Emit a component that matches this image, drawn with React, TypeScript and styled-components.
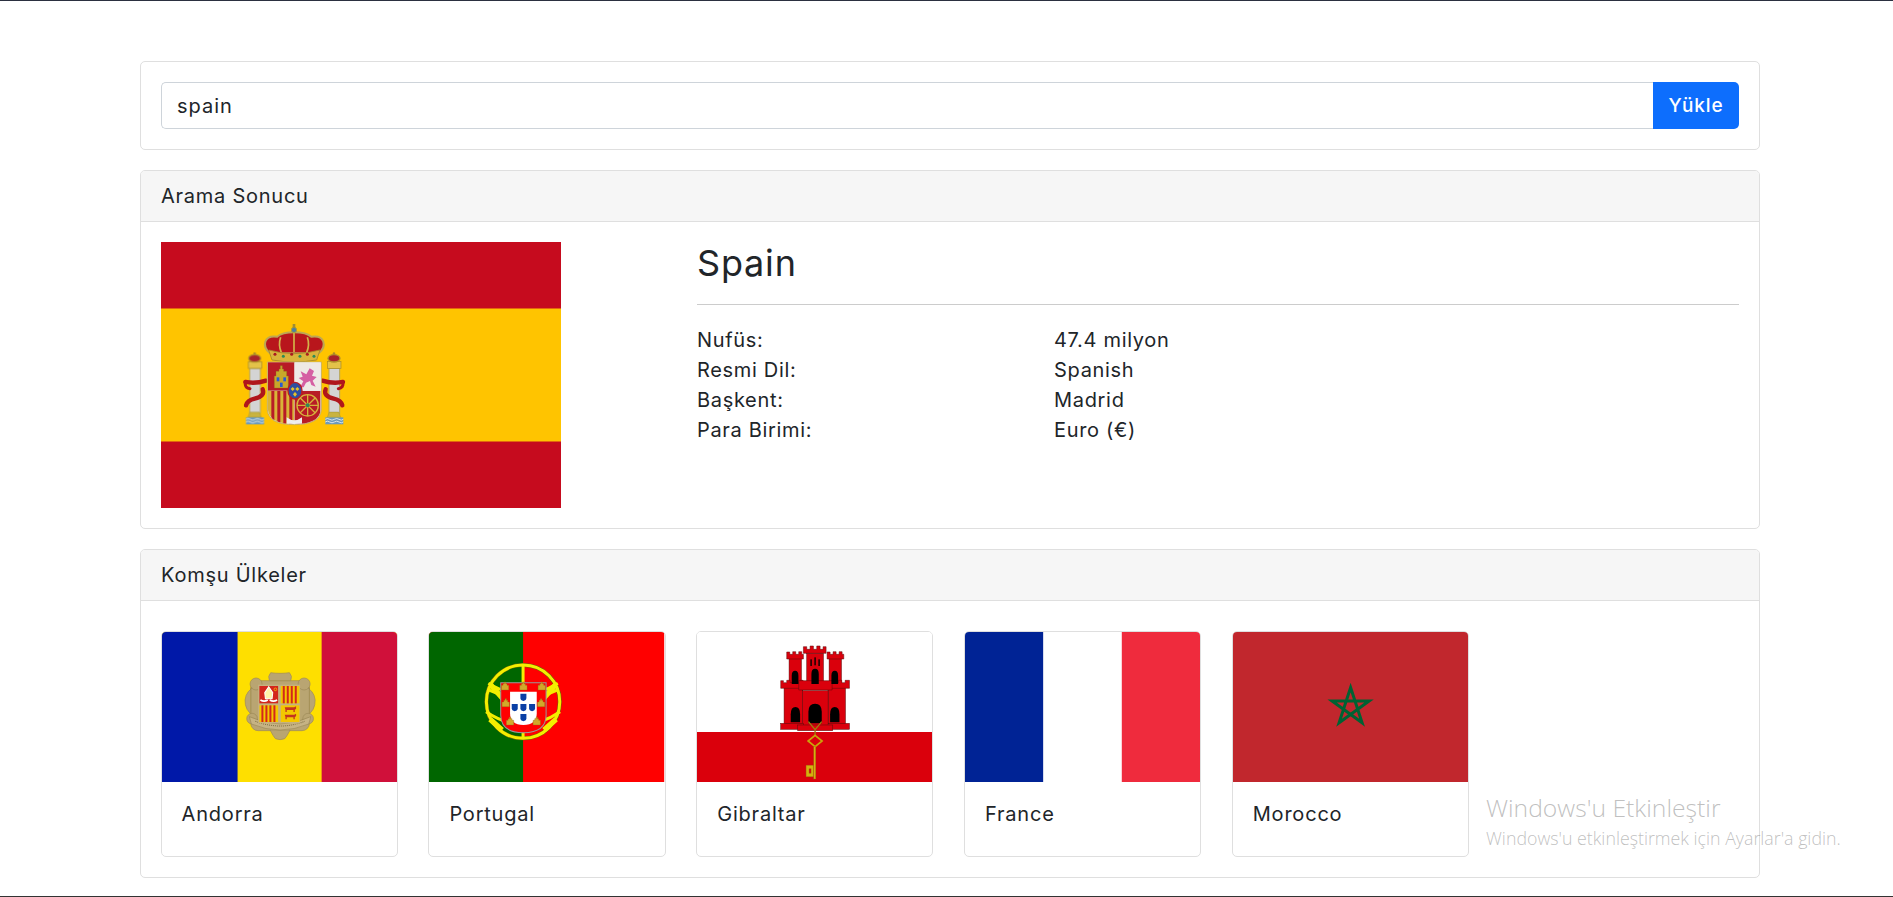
import React from "react";
import styled, { createGlobalStyle } from "styled-components";

const Global = createGlobalStyle`
  html, body { margin: 0; padding: 0; background: #fff; }
  body { font-family: Inter, "Noto Sans", "Liberation Sans", sans-serif; color: #212529; font-weight: 400; }
`;

const Page = styled.div`
  position: relative;
  height: 897px;
  box-sizing: border-box;
  overflow: hidden;
  border-top: 1px solid #2b3040;
  border-bottom: 1px solid #333;
  padding: 60px 133px 0 140px;
  display: flex;
  flex-direction: column;
  gap: 20px;
`;

const Card = styled.section`
  border: 1px solid #dfdfdf;
  border-radius: 5px;
  background: #fff;
  overflow: hidden;
`;

const SearchBody = styled.form`
  padding: 20px;
  display: flex;
  margin: 0;
`;

const SearchInput = styled.input`
  flex: 1;
  min-width: 0;
  height: 47px;
  box-sizing: border-box;
  border: 1px solid #ced4da;
  border-right: 0;
  border-radius: 5px 0 0 5px;
  padding: 0 15px;
  font: 400 20px Inter, sans-serif;
  letter-spacing: 1px;
  color: #212529;
  outline: none;
`;

const LoadButton = styled.button`
  width: 86px;
  height: 47px;
  border: 0;
  border-radius: 0 5px 5px 0;
  background: #0d6efd;
  color: #fff;
  font: 500 19px Inter, sans-serif;
  letter-spacing: 0.9px;
`;

const CardHeader = styled.header`
  height: 51px;
  box-sizing: border-box;
  background: #f6f6f6;
  border-bottom: 1px solid #dfdfdf;
  padding: 0 20px;
  display: flex;
  align-items: center;
  font-size: 20px;
  letter-spacing: 0.75px;
`;

const ResultBody = styled.div`
  padding: 20px;
  display: grid;
  grid-template-columns: 536px 1fr;
`;

const MainFlag = styled.div`
  width: 400px;
  height: 266px;
  svg { display: block; width: 100%; height: 100%; }
`;

const Title = styled.h1`
  margin: 0;
  height: 62px;
  font-size: 36px;
  line-height: 43px;
  font-weight: 400;
  letter-spacing: 0.8px;
  color: #212529;
`;

const Rule = styled.hr`
  margin: 0 0 20px;
  border: 0;
  border-top: 1px solid #ccc;
`;

const Facts = styled.dl`
  margin: 0;
  display: grid;
  grid-template-columns: 357px 1fr;
  grid-auto-rows: 30px;
  font-size: 20px;
  line-height: 30px;
  letter-spacing: 0.68px;
`;

const Term = styled.dt``;

const Value = styled.dd`
  margin: 0;
`;

const NeighbourBody = styled.div`
  padding: 30px 20px 20px 19.6px;
  display: flex;
  gap: 30.6px;
`;

const Neighbour = styled.article`
  width: 237.2px;
  box-sizing: border-box;
  border: 1px solid #dfdfdf;
  border-radius: 5px;
  overflow: hidden;
`;

const NeighbourFlag = styled.div`
  height: 150px;
  svg { display: block; width: 100%; height: 100%; }
`;

const NeighbourName = styled.div`
  padding: 17px 20px 27px;
  font-size: 20px;
  line-height: 30px;
  letter-spacing: 0.8px;
`;

const Watermark = styled.div`
  position: absolute;
  left: 1486px;
  top: 791px;
  color: rgba(150, 150, 150, 0.6);
  font-family: "Open Sans", sans-serif;
  font-weight: 300;
  white-space: nowrap;
  pointer-events: none;
`;

const WatermarkTitle = styled.div`
  font-size: 24.7px;
  line-height: 32px;
`;

const WatermarkText = styled.div`
  font-size: 17.8px;
  line-height: 28px;
`;

const SpainFlag = () => (
  <svg viewBox="0 0 400 266" preserveAspectRatio="none">
    <defs>
      <filter id="soft" x="-5%" y="-5%" width="110%" height="110%">
        <feGaussianBlur stdDeviation="1.2" />
      </filter>
      <clipPath id="spain-low">
        <path d="M144 272H302V330Q298 372 223 372Q148 372 144 330Z" />
      </clipPath>
    </defs>
    <rect width="400" height="266" fill="#c60b1e" />
    <rect y="66.5" width="400" height="133" fill="#ffc400" />
    <g transform="translate(59 58) scale(.3333)" filter="url(#soft)">
      {[0, 238].map((dx) => (
        <g key={dx} transform={`translate(${dx} 0)`}>
          <rect x="89" y="205" width="32" height="135" fill="#d4d4d4" stroke="#b5a55e" strokeWidth="3" />
          <rect x="85" y="185" width="40" height="20" fill="#e3c24a" stroke="#a58a2a" strokeWidth="2" />
          <ellipse cx="104" cy="175" rx="18" ry="11" fill="#a9242a" stroke="#b0902c" strokeWidth="4" />
          <circle cx="104" cy="161" r="4" fill="#a8892a" />
          <path d="M90 336h28l6 16H84z" fill="#c9b33f" stroke="#8f8230" />
          <rect x="78" y="352" width="54" height="21" fill="#6a9abd" />
          <path d="M78 358q6-5 13 0t14 0 14 0 13 0M78 366q6-5 13 0t14 0 14 0 13 0" stroke="#eef2f2" strokeWidth="2.5" fill="none" />
        </g>
      ))}
      <g fill="none" stroke="#b0131c" strokeWidth="13" strokeLinecap="round" strokeLinejoin="round">
        <path d="M76 246q30 6 62-4" />
        <path d="M76 248q-2 16 14 18" strokeWidth="9" />
        <path d="M128 268q8 20-24 28q-22 5-26 20" />
        <path d="M307 242q32 10 62 4" />
        <path d="M369 248q2 16-14 18" strokeWidth="9" />
        <path d="M317 268q-8 20 24 28q22 5 26 20" />
      </g>
      <path d="M150 160C124 138 132 104 172 110C190 92 255 92 274 110C314 104 322 138 296 160Z" fill="#b8161f" stroke="#bda652" strokeWidth="6" />
      <path d="M222 98v58M182 112q-8 22 2 46M262 112q8 22-2 46" stroke="#d2b349" strokeWidth="5" fill="none" />
      <path d="M146 150Q222 172 300 150L290 180Q222 192 156 180Z" fill="#d9b33a" stroke="#a2852a" strokeWidth="2.5" />
      <circle cx="222" cy="90" r="8" fill="#4d7f9f" stroke="#a89a3e" strokeWidth="3" />
      <rect x="218" y="72" width="8" height="12" fill="#a08d33" />
      {[165, 190, 215, 240, 262, 282].map((x, i) => (
        <circle key={x} cx={x} cy={i % 2 ? 169 : 163} r="4.5" fill={i % 2 ? "#2e8b57" : "#a81a22"} />
      ))}
      <path d="M142 186H304V330Q300 374 223 374Q146 374 142 330Z" fill="#e9e9e9" stroke="#c7b05a" strokeWidth="3" />
      <rect x="144" y="187" width="79" height="85" fill="#b81f25" />
      <path d="M163 264V228h5v-14h9v-7h4v-10h6v10h4v7h9v14h5v36z" fill="#c8a82c" stroke="#8a7320" />
      <rect x="170" y="232" width="8" height="12" fill="#2b5bd0" />
      <rect x="190" y="232" width="8" height="12" fill="#2b5bd0" />
      <rect x="180" y="248" width="8" height="13" fill="#2b5bd0" />
      <rect x="224" y="187" width="78" height="85" fill="#eee9e6" />
      <path d="M240 262l10-18-14-10 12-4-6-16 17 9 10-18 13 8-6 14 14 4-12 11 9 18-13-5-4-12-12 5-7 14z" fill="#d55fa3" />
      <g clipPath="url(#spain-low)">
        <rect x="144" y="272" width="79" height="102" fill="#d9b338" />
        {[154, 172, 190, 208].map((x) => (
          <rect key={x} x={x} y="272" width="9" height="102" fill="#b81f25" />
        ))}
        <rect x="224" y="272" width="78" height="102" fill="#b81f25" />
        <g stroke="#d5b13c" strokeWidth="4" fill="none">
          <circle cx="263" cy="316" r="32" />
          <path d="M231 316h64M263 284v64M240 293l46 46M286 293l-46 46" />
        </g>
        <circle cx="263" cy="316" r="6" fill="#2e8b57" />
        <path d="M200 352q23 18 46 0v22h-46z" fill="#eee" />
      </g>
      <ellipse cx="225" cy="272" rx="21" ry="25" fill="#2f4fa0" stroke="#b81f25" strokeWidth="4" />
      <path d="M218 261l6 6-6 6-6-6zM232 261l6 6-6 6-6-6zM225 276l6 7-6 7-6-7z" fill="#e6c22c" />
    </g>
  </svg>
);

const AndorraFlag = () => (
  <svg viewBox="0 0 235 150" preserveAspectRatio="none">
    <rect width="235" height="150" fill="#fedf00" />
    <rect width="75.5" height="150" fill="#0018a8" />
    <rect x="159.5" width="75.5" height="150" fill="#d0103a" />
    <g transform="translate(68 28) scale(.3333)">
      <g fill="#b9a572" stroke="#9d8a58" strokeWidth="2">
        <rect x="62" y="62" width="176" height="150" rx="22" />
        <path d="M118 62q-6-14 4-24 12 2 28 2t28-2q10 10 4 24z" />
        <circle cx="78" cy="72" r="18" />
        <circle cx="222" cy="72" r="18" />
        <path d="M66 84q-26 20-20 50 2 14 16 28v-78z" />
        <path d="M234 84q26 20 20 50-2 14-16 28v-78z" />
        <circle cx="66" cy="176" r="16" />
        <circle cx="234" cy="176" r="16" />
        <path d="M120 210q10 20 16 26 14 6 28 0 6-6 16-26z" />
      </g>
      <path d="M58 170q92 44 184 0l-6 22q-86 36-172 0z" fill="#c6b384" stroke="#8f7c4c" strokeWidth="1.5" />
      <path d="M76 184q74 28 148 0" stroke="#7d6c40" strokeWidth="3" strokeDasharray="3 3" fill="none" />
      <rect x="84" y="74" width="126" height="116" fill="#c4b180" />
      <rect x="88" y="78" width="56" height="52" fill="#d3261c" />
      <path d="M116 80l12 18-2 18h-20l-2-18z" fill="#fff2a8" stroke="#fff" strokeWidth="3" />
      <path d="M91 120q11 7 22 0M119 120q11 7 22 0" stroke="#fff" strokeWidth="5" fill="none" />
      <circle cx="136" cy="88" r="4" fill="none" stroke="#ffd200" strokeWidth="2" />
      <rect x="152" y="78" width="56" height="52" fill="#f3c700" />
      <rect x="88" y="136" width="56" height="50" fill="#f3c700" />
      {[0, 1, 2, 3].map((i) => (
        <React.Fragment key={i}>
          <rect x={158 + i * 12} y="78" width="6" height="52" fill="#d3261c" />
          <rect x={94 + i * 12} y="136" width="6" height="50" fill="#d3261c" />
        </React.Fragment>
      ))}
      <rect x="152" y="136" width="56" height="50" fill="#f3c700" />
      {[142, 164].map((y) => (
        <path key={y} d={`M164 ${y}h28l6-3v8l-4 2v7h-4v-6h-20v6h-4v-7z`} fill="#c3341e" />
      ))}
    </g>
  </svg>
);

const PortugalFlag = () => (
  <svg viewBox="0 0 235 150" preserveAspectRatio="none">
    <rect width="235" height="150" fill="#f00" />
    <rect width="94" height="150" fill="#060" />
    <g transform="translate(41 28) scale(.3333)">
      <g fill="none" strokeLinejoin="round">
        <circle cx="159" cy="125" r="110" stroke="#6b6b00" strokeWidth="12" />
        <g stroke="#f4ee00" strokeWidth="9">
          <circle cx="159" cy="125" r="110" />
          <path d="M159 15V235M52 88Q159 140 266 88M55 70Q159 135 263 70M48 155Q159 230 270 155" />
          <path d="M62 75L100 118M256 75L218 118M60 178L96 210M258 178L222 210" strokeWidth="16" />
        </g>
      </g>
      <path d="M92 68H228V165Q228 218 160 218Q92 218 92 165Z" fill="#f00" stroke="#999" strokeWidth="3" />
      <path d="M120 95H200V160Q200 195 160 195Q120 195 120 160Z" fill="#fff" />
      {[[160, 111], [134, 142], [160, 142], [186, 142], [160, 172]].map(([x, y]) => (
        <path key={`${x}-${y}`} d={`M${x - 9} ${y - 10}h18v13q0 7-9 9q-9-2-9-9z`} fill="#0a3fa5" />
      ))}
      {[[105, 80], [160, 80], [215, 80], [107, 130], [213, 130], [120, 185], [200, 185]].map(([x, y]) => (
        <path key={`c${x}-${y}`} d={`M${x - 11} ${y + 10}v-14h5v-5h4v-5h4v5h4v5h5v14z`} fill="#d2a92a" stroke="#8c6d14" />
      ))}
    </g>
  </svg>
);

const GibraltarFlag = () => (
  <svg viewBox="0 0 235 150" preserveAspectRatio="none">
    <rect width="235" height="150" fill="#fff" />
    <rect y="100" width="235" height="50" fill="#da000c" />
    <g transform="translate(63 -2) scale(.3333)">
      <g fill="#da000c" stroke="#5a0a0a" strokeWidth="1.5">
        <rect x="140" y="70" width="50" height="90" />
        <path d="M130 50h10v8h10v-10h10v10h10v-10h10v10h9v-8h9v20h-68z" />
        <rect x="87" y="85" width="37" height="75" />
        <path d="M80 66h9v7h9v-8h9v8h9v-8h9v8h5v14h-50z" />
        <rect x="207" y="85" width="37" height="75" />
        <path d="M201 66h9v7h9v-8h9v8h9v-8h9v8h5v14h-50z" />
        <rect x="72" y="170" width="56" height="112" />
        <rect x="204" y="170" width="52" height="112" />
        <path d="M62 152h8v6h10v-7h10v7h10v-7h10v7h10v-7h9v24H62z" />
        <path d="M205 158h10v-7h10v7h10v-7h10v7h10v-7h13v24h-63z" />
        <rect x="127" y="182" width="77" height="104" />
        <path d="M116 152h100v28h-100z" />
        <rect x="62" y="280" width="68" height="18" />
        <rect x="205" y="280" width="63" height="18" />
        <rect x="113" y="285" width="105" height="17" />
      </g>
      <g fill="#000">
        <path d="M95 162v-25q0-15 10-15t10 15v25z" />
        <path d="M154 162v-30q0-16 11-16t11 16v30z" />
        <path d="M214 162v-25q0-15 10-15t10 15v25z" />
        <path d="M92 277v-24q0-22 14-22t14 22v24z" />
        <path d="M145 280v-35q0-24 20-24t20 24v35z" />
        <path d="M210 277v-24q0-22 14-22t14 22v24z" />
        <rect x="151" y="88" width="4" height="20" />
        <rect x="163" y="82" width="4" height="24" />
        <rect x="175" y="88" width="4" height="20" />
      </g>
      <g fill="none" stroke="#c9a50a" strokeWidth="4">
        <path d="M145 275l20 24 20-24M165 299v16" stroke="#9c7f10" />
        <path d="M165 316l21 17-21 17-21-17z" strokeWidth="5" />
      </g>
      <rect x="161" y="350" width="6" height="97" fill="#d6b00e" stroke="#8c6d14" />
      <path d="M138 406h22v34h-22z M147 416v14h6v-14z" fill="#d6b00e" stroke="#8c6d14" fillRule="evenodd" />
    </g>
  </svg>
);

const FranceFlag = () => (
  <svg viewBox="0 0 3 2" preserveAspectRatio="none">
    <rect width="1" height="2" fill="#002395" />
    <rect x="1" width="1" height="2" fill="#fff" />
    <rect x="2" width="1" height="2" fill="#ef2b3d" />
  </svg>
);

const MoroccoFlag = () => (
  <svg viewBox="0 0 235 150" preserveAspectRatio="none">
    <rect width="235" height="150" fill="#c1272d" />
    <path d="M117.5 55.5L129 90.8 99 69H136L106 90.8z" fill="none" stroke="#006233" strokeWidth="3" />
  </svg>
);

const neighbours = [
  { name: "Andorra", Flag: AndorraFlag },
  { name: "Portugal", Flag: PortugalFlag },
  { name: "Gibraltar", Flag: GibraltarFlag },
  { name: "France", Flag: FranceFlag },
  { name: "Morocco", Flag: MoroccoFlag },
];

const facts = [
  ["Nufüs:", "47.4 milyon"],
  ["Resmi Dil:", "Spanish"],
  ["Başkent:", "Madrid"],
  ["Para Birimi:", "Euro (€)"],
];

export default function App() {
  return (
    <Page>
      <Global />
      <Card>
        <SearchBody>
          <SearchInput defaultValue="spain" />
          <LoadButton type="button">Yükle</LoadButton>
        </SearchBody>
      </Card>
      <Card>
        <CardHeader>Arama Sonucu</CardHeader>
        <ResultBody>
          <MainFlag>
            <SpainFlag />
          </MainFlag>
          <div>
            <Title>Spain</Title>
            <Rule />
            <Facts>
              {facts.map(([k, v]) => (
                <React.Fragment key={k}>
                  <Term>{k}</Term>
                  <Value>{v}</Value>
                </React.Fragment>
              ))}
            </Facts>
          </div>
        </ResultBody>
      </Card>
      <Card>
        <CardHeader>Komşu Ülkeler</CardHeader>
        <NeighbourBody>
          {neighbours.map(({ name, Flag }) => (
            <Neighbour key={name}>
              <NeighbourFlag>
                <Flag />
              </NeighbourFlag>
              <NeighbourName>{name}</NeighbourName>
            </Neighbour>
          ))}
        </NeighbourBody>
      </Card>
      <Watermark>
        <WatermarkTitle>Windows'u Etkinleştir</WatermarkTitle>
        <WatermarkText>Windows'u etkinleştirmek için Ayarlar'a gidin.</WatermarkText>
      </Watermark>
    </Page>
  );
}
